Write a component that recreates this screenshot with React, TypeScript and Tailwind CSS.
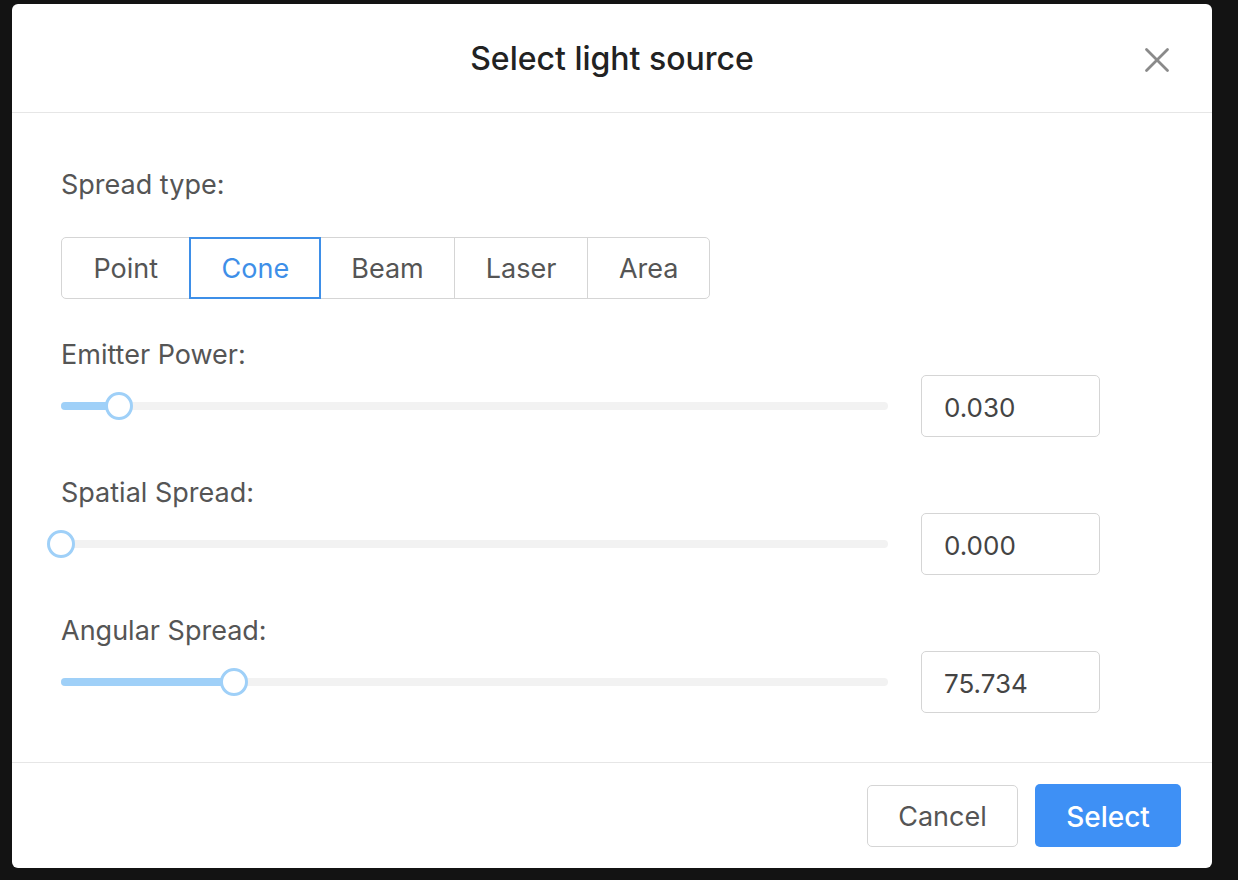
import { X } from 'lucide-react';

const sliders = [
  { label: 'Emitter Power:', pct: 7, value: '0.030' },
  { label: 'Spatial Spread:', pct: 0, value: '0.000' },
  { label: 'Angular Spread:', pct: 20.9, value: '75.734' },
];

const types = [
  { name: 'Point', w: 'w-[128px]' },
  { name: 'Cone', w: 'w-[131px]' },
  { name: 'Beam', w: 'w-[134px]' },
  { name: 'Laser', w: 'w-[134px]' },
  { name: 'Area', w: 'w-[122px]' },
];

function Slider({ pct }: { pct: number }) {
  return (
    <div className="relative w-[827px] h-[8px] rounded-full bg-[#f2f2f2]">
      <div className="h-full rounded-full bg-[#9fd0f8]" style={{ width: `${pct}%` }} />
      <div
        className="absolute top-1/2 w-[28px] h-[28px] -translate-x-1/2 -translate-y-1/2 rounded-full border-[3px] border-[#9fd0f8] bg-white"
        style={{ left: `${pct}%` }}
      />
    </div>
  );
}

export default function App() {
  const selected = 'Cone';

  return (
    <div className="w-[1238px] h-[880px] bg-[#131313] pl-[12px] pt-[4px] font-['Inter','Liberation_Sans',sans-serif]">
      <div className="w-[1200px] h-[864px] bg-white rounded-[6px] flex flex-col">
        {/* header */}
        <div className="relative h-[109px] flex items-center justify-center border-b border-[#e6e6e6]">
          <span className="text-[32px] font-medium text-[#222] mt-[2px]">Select light source</span>
          <X className="absolute right-[34px] top-[35px] text-[#8a8a8a]" size={42} strokeWidth={1.6} />
        </div>

        {/* body */}
        <div className="flex-1 pl-[49px] pt-[56px] border-b border-[#e6e6e6]">
          <div className="h-[32px] leading-[32px] text-[27px] text-[#555]">Spread type:</div>
          <div className="mt-[36px] flex h-[62px] w-[649px] rounded-[5px] border border-[#d5d5d5]">
            {types.map((t, i) => (
              <div
                key={t.name}
                className={`${t.w} flex items-center justify-center pt-[2px] text-[27px] ${
                  t.name === selected
                    ? 'text-[#3e8fe8] outline-2 outline-[#3e8fe8] -outline-offset-1 relative z-10'
                    : 'text-[#555]'
                } ${i > 0 ? 'border-l border-[#d5d5d5]' : ''}`}
              >
                {t.name}
              </div>
            ))}
          </div>

          {sliders.map((s) => (
            <div key={s.label} className="mt-[40px]">
              <div className="h-[32px] leading-[32px] text-[27px] text-[#555]">{s.label}</div>
              <div className="mt-[4px] flex items-center">
                <Slider pct={s.pct} />
                <div className="ml-[33px] w-[179px] h-[62px] rounded-[5px] border border-[#d5d5d5] flex items-center pl-[22px] pt-[2px] text-[26px] text-[#444]">
                  {s.value}
                </div>
              </div>
            </div>
          ))}
        </div>

        {/* footer */}
        <div className="h-[105px] flex items-start justify-end gap-[17px] pt-[22px] pr-[31px]">
          <button className="w-[151px] h-[62px] pt-[3px] rounded-[5px] border border-[#d5d5d5] bg-white text-[27px] text-[#555]">
            Cancel
          </button>
          <button className="w-[146px] h-[63px] -mt-[1px] pt-[3px] rounded-[5px] bg-[#3e90f5] text-[28px] font-medium text-white">
            Select
          </button>
        </div>
      </div>
    </div>
  );
}
